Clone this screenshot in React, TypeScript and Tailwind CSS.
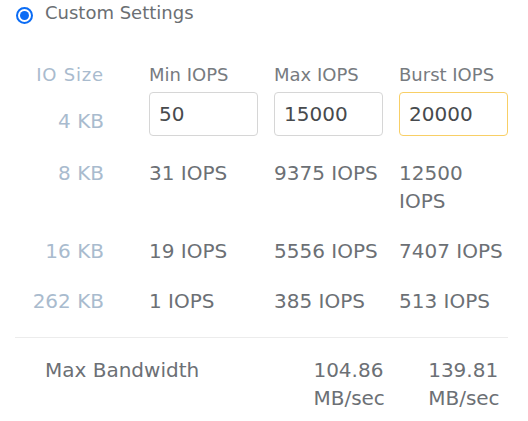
import React from 'react';

interface RateRow {
    size: string;
    min: string;
    max: string;
    burst: string;
}

const rows: RateRow[] = [
    { size: '8 KB', min: '31 IOPS', max: '9375 IOPS', burst: '12500 IOPS' },
    { size: '16 KB', min: '19 IOPS', max: '5556 IOPS', burst: '7407 IOPS' },
    { size: '262 KB', min: '1 IOPS', max: '385 IOPS', burst: '513 IOPS' },
];

const gridCols = 'grid grid-cols-[118px_109px_109px_109px] gap-x-4';

const App: React.FC = () => {
    return (
        <div className="w-[528px] h-[421px] bg-white overflow-hidden text-[20px] leading-[28px] text-[#6c7075] font-['DejaVu_Sans',sans-serif]">
            {/* radio option */}
            <div className="flex items-start h-[26px] pl-4 text-[18px] leading-[26px]">
                <span className="mt-[7px] w-[17px] h-[17px] rounded-full border-[2px] border-[#0b6cf5] flex items-center justify-center">
                    <span className="w-[9px] h-[9px] rounded-full bg-[#0b6cf5]" />
                </span>
                <span className="ml-3 text-[#6b6f73]">Custom Settings</span>
            </div>

            <div className="ml-[15px] w-[493px]">
                {/* header */}
                <div className={`${gridCols} mt-[35px] text-[18px] text-[#777b80]`}>
                    <div className="text-right pr-[29px] text-[#a9bbce] tracking-[0.8px]">IO Size</div>
                    <div>Min IOPS</div>
                    <div>Max IOPS</div>
                    <div>Burst IOPS</div>
                </div>

                {/* 4 KB inputs */}
                <div className={`${gridCols} mt-[3px]`}>
                    <div className="text-right pr-[29px] pt-[15px] text-[#a9bbce]">4 KB</div>
                    <input
                        defaultValue="50"
                        className="h-[44px] w-[109px] rounded-[4px] border border-[#d6d6d6] pl-[9px] text-[20px] text-[#474a4d] outline-none"
                    />
                    <input
                        defaultValue="15000"
                        className="h-[44px] w-[109px] rounded-[4px] border border-[#d6d6d6] pl-[9px] text-[20px] text-[#474a4d] outline-none"
                    />
                    <input
                        defaultValue="20000"
                        className="h-[44px] w-[109px] rounded-[4px] border border-[#f8cf66] pl-[9px] text-[20px] text-[#474a4d] outline-none"
                    />
                </div>

                {rows.map((r, i) => (
                    <div key={r.size} className={`${gridCols} ${i === 0 ? 'mt-[23px]' : 'mt-[22px]'}`}>
                        <div className="text-right pr-[29px] text-[#a9bbce]">{r.size}</div>
                        <div>{r.min}</div>
                        <div>{r.max}</div>
                        <div>{r.burst}</div>
                    </div>
                ))}

                <div className="mt-[22px] border-t border-[#ececec]" />

                {/* bandwidth */}
                <div className="mt-[18px] flex">
                    <div className="pl-[30px] w-[299px]">Max Bandwidth</div>
                    <div className="w-[115px]">
                        <div className="w-[80px]">104.86 MB/sec</div>
                    </div>
                    <div className="w-[80px]">139.81 MB/sec</div>
                </div>
            </div>
        </div>
    );
};

export default App;
